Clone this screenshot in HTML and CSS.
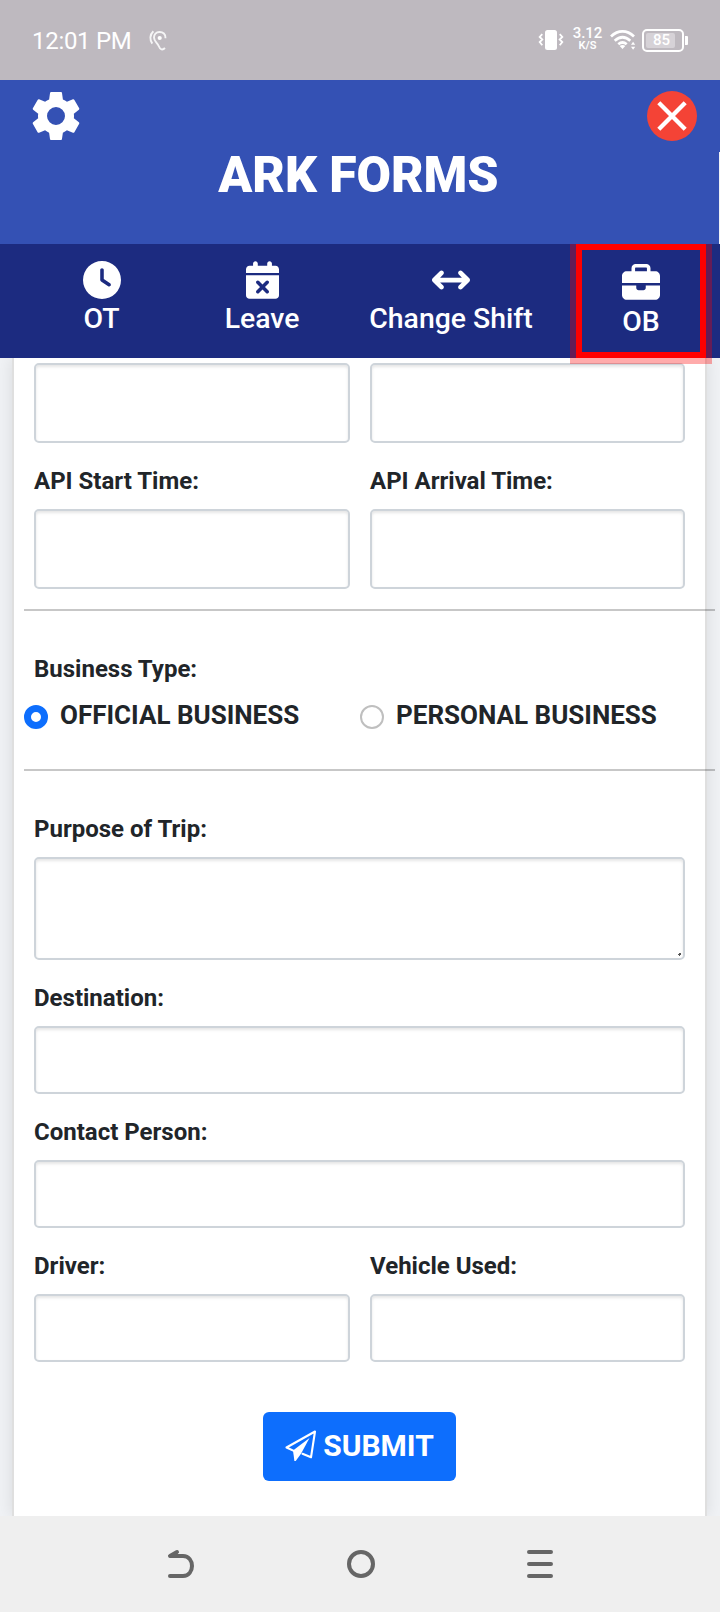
FILE: index.html
```html
<!DOCTYPE html>
<html lang="en">
<head>
<meta charset="utf-8">
<title>ARK Forms</title>
<link rel="stylesheet" href="styles.css">
</head>
<body>
<div class="statusbar">
  <span class="clock">12:01 PM</span>
  <svg class="ear" width="20" height="22" viewBox="0 0 20 22" fill="none" stroke="#fff" stroke-opacity=".85" stroke-width="1.9"><path d="M4.4 1.2C.6 4.600.6 10 3.300 13.600M16.500 8.300C16.800 4 14 2 10.500 2 7 2 5 4.800 5 7.500c0 4 3.500 5 5 9 1 3 3.500 4 6 1.500"/><circle cx="10.700" cy="8" r="2.100" fill="#fff" stroke="none"/></svg>
  <span class="spacer"></span>
  <svg class="vibrate" width="26" height="22" viewBox="0 0 26 22" fill="none" stroke="#fff" stroke-width="1.800"><rect x="7" y="1" width="12" height="20" rx="2.500" fill="#fff" stroke="none"/><path d="M4.300 5.200 1.700 8l2.600 2.500L1.700 13l2.600 3.300M21.700 5.200 24.300 8l-2.600 2.500 2.600 2.500-2.600 3.300"/></svg>
  <span class="speed"><b>3.12</b><i>K/S</i></span>
  <svg class="wifi" width="26" height="20" viewBox="0 0 26 20" fill="none" stroke="#fff" stroke-width="2.700"><path d="M1 6.500C8-.3 17-.3 24 6.500M4.700 10.800c5-4.600 10.600-4.600 15.600 0M8.300 14.300c3-2.600 5.400-2.600 8.400 0"/><path d="m9.700 16 2.800 3 2.800-3c-1.500-1.300-4-1.300-5.600 0zM21 14.700l2.100-3 2.100 3zM21 16.700l2.100 3 2.100-3z" fill="#fff" stroke="none"/></svg>
  <span class="battery"><span class="level">85</span></span><span class="cap"></span>
</div>

<header class="header">
  <div class="actions">
    <svg class="gear" width="60" height="60" viewBox="0 0 24 24" fill="#fff"><path fill-rule="evenodd" d="M19.140 12.940c.04-.3.060-.61.060-.94 0-.32-.02-.64-.07-.94l2.030-1.580c.18-.14.23-.41.12-.61l-1.920-3.320c-.12-.22-.37-.29-.59-.22l-2.390.96c-.5-.38-1.030-.7-1.620-.94l-.36-2.540c-.04-.24-.24-.41-.48-.41h-3.840c-.24 0-.43.17-.47.41l-.36 2.540c-.59.24-1.130.57-1.620.94l-2.390-.96c-.22-.08-.47 0-.59.22L2.740 8.870c-.12.21-.08.47.12.61l2.030 1.580c-.05.3-.09.63-.09.94s.02.64.07.94l-2.030 1.580c-.18.14-.23.41-.12.61l1.920 3.320c.12.22.37.29.59.22l2.390-.96c.5.38 1.030.7 1.620.94l.36 2.540c.05.24.24.41.48.41h3.840c.24 0 .44-.17.47-.41l.36-2.540c.59-.24 1.130-.56 1.620-.94l2.390.96c.22.08.47 0 .59-.22l1.920-3.320c.12-.22.07-.47-.12-.61zM12 15.600a3.600 3.600 0 1 1 0-7.200 3.600 3.600 0 0 1 0 7.200z"/></svg>
    <svg width="50" height="50" viewBox="0 0 50 50"><circle cx="25" cy="25" r="25" fill="#f44336"/><path d="m11.800 11.800 26.400 26.400m0-26.400L11.800 38.200" stroke="#fff" stroke-width="4.300"/></svg>
  </div>
  <h1 class="title">ARK FORMS</h1>
  <span class="edge"></span>
</header>

<nav class="tabs">
  <a class="tab"><svg width="38" height="38" viewBox="0 0 512 512" fill="#fff"><path d="M256 0a256 256 0 1 1 0 512A256 256 0 1 1 256 0zM232 120V256c0 8 4 15.500 10.700 20l96 64c11 7.400 25.900 4.400 33.300-6.700s4.400-25.900-6.700-33.300L280 243.200V120c0-13.300-10.700-24-24-24s-24 10.700-24 24z"/></svg><span>OT</span></a>
  <a class="tab"><svg width="33" height="38" viewBox="0 0 448 512" fill="#fff"><path d="M128 0c17.700 0 32 14.300 32 32V64H288V32c0-17.700 14.300-32 32-32s32 14.300 32 32V64h48c26.500 0 48 21.500 48 48v48H0V112C0 85.500 21.500 64 48 64H96V32c0-17.700 14.300-32 32-32zM0 192H448V464c0 26.500-21.500 48-48 48H48c-26.500 0-48-21.500-48-48V192zM305 305c9.400-9.400 9.400-24.600 0-33.900s-24.600-9.400-33.900 0l-47 47-47-47c-9.400-9.400-24.600-9.400-33.900 0s-9.400 24.600 0 33.900l47 47-47 47c-9.400 9.400-9.400 24.600 0 33.900s24.600 9.400 33.900 0l47-47 47 47c9.400 9.400 24.600 9.400 33.900 0s9.400-24.600 0-33.900l-47-47 47-47z"/></svg><span>Leave</span></a>
  <a class="tab"><svg width="38" height="38" viewBox="0 0 512 512" fill="#fff"><path d="M406.600 374.600l96-96c12.500-12.500 12.500-32.800 0-45.300l-96-96c-12.500-12.500-32.800-12.500-45.300 0s-12.500 32.800 0 45.300L402.700 224l-293.500 0 41.400-41.400c12.500-12.500 12.500-32.800 0-45.300s-32.800-12.500-45.300 0l-96 96c-12.500 12.500-12.500 32.800 0 45.300l96 96c12.500 12.500 32.800 12.500 45.300 0s12.500-32.800 0-45.300L109.300 288l293.500 0-41.400 41.400c-12.500 12.500-12.500 32.800 0 45.300s32.800 12.500 45.300 0z"/></svg><span>Change Shift</span></a>
  <a class="tab active"><svg width="38" height="38" viewBox="0 0 512 512" fill="#fff"><path d="M184 48H328c4.400 0 8 3.600 8 8V96H176V56c0-4.400 3.600-8 8-8zm-56 8V96H64C28.700 96 0 124.700 0 160v96H512V160c0-35.300-28.700-64-64-64H384V56c0-30.900-25.100-56-56-56H184c-30.900 0-56 25.100-56 56zM512 288H320v32c0 17.700-14.300 32-32 32H224c-17.700 0-32-14.300-32-32V288H0V416c0 35.300 28.700 64 64 64H448c35.300 0 64-28.700 64-64V288z"/></svg><span>OB</span></a>
</nav>

<main class="page">
  <form class="card">
    <div class="row first">
      <input class="field tall">
      <input class="field tall">
    </div>
    <div class="row">
      <label class="group"><span class="label">API Start Time:</span><input class="field tall"></label>
      <label class="group"><span class="label">API Arrival Time:</span><input class="field tall"></label>
    </div>
    <hr class="rule">
    <div class="business">
      <span class="label">Business Type:</span>
      <div class="radios">
        <label class="option"><span class="radio checked"></span><span>OFFICIAL BUSINESS</span></label>
        <label class="option"><span class="radio"></span><span>PERSONAL BUSINESS</span></label>
      </div>
    </div>
    <hr class="rule">
    <label class="group purpose"><span class="label">Purpose of Trip:</span>
      <span class="field area"><svg class="grip" width="3" height="3" viewBox="0 0 3 3"><path d="M0 1h1V0h2v2H2v1H1V2H0z" fill="#555"/></svg></span></label>
    <label class="group"><span class="label">Destination:</span><input class="field"></label>
    <label class="group"><span class="label">Contact Person:</span><input class="field"></label>
    <div class="row">
      <label class="group"><span class="label">Driver:</span><input class="field"></label>
      <label class="group"><span class="label">Vehicle Used:</span><input class="field"></label>
    </div>
    <button class="submit" type="button"><svg width="32" height="32" viewBox="0 0 32 32"><path d="M30 1.500 1.500 17.500l7.300 3.400M30 1.500 26 27.300l-8.500-3.500" fill="none" stroke="#fff" stroke-width="2.100" stroke-linejoin="round" stroke-linecap="round"/><path d="M24.500 8 8 20.600l1.400 10.300h1.300l5.300-7.200z" fill="#fff"/></svg><span>SUBMIT</span></button>
  </form>
</main>

<footer class="sysnav">
  <svg width="28" height="30" viewBox="0 0 28 30" fill="none" stroke="#666" stroke-width="4" stroke-linecap="round" stroke-linejoin="round"><path d="M10 3 3 7h13c12 0 12 20 0 20H3"/></svg>
  <svg width="28" height="28" viewBox="0 0 28 28" fill="none" stroke="#666" stroke-width="4"><circle cx="14" cy="14" r="12"/></svg>
  <svg width="26" height="28" viewBox="0 0 26 28" stroke="#666" stroke-width="4" stroke-linecap="round"><path d="M2 2h22M2 14h22M2 26h22"/></svg>
</footer>
</body>
</html>
```
FILE: styles.css
```css
* { box-sizing: border-box; }
body {
  margin: 0;
  width: 720px;
  height: 1612px;
  overflow: hidden;
  display: flex;
  flex-direction: column;
  font-family: Roboto, "Liberation Sans", sans-serif;
  color: #212529;
  background: #f0f2f5;
}
svg { display: block; flex: none; }

.statusbar {
  height: 80px;
  flex: none;
  display: flex;
  align-items: center;
  padding: 0 32px;
  background: #beb9bf;
  color: #fff;
}
.clock { font-size: 24px; letter-spacing: -.3px; line-height: 30px; width: 99px; padding-top: 2px; white-space: nowrap; }
.ear { margin: 1px 0 0 18px; }
.spacer { flex: 1; }
.vibrate { margin-right: 9px; }
.speed { width: 29px; display: flex; flex-direction: column; align-items: center; margin-right: 8px; padding-bottom: 2px; }
.speed b { font-size: 15px; line-height: 13px; font-weight: 500; }
.speed i { font-size: 11px; line-height: 12px; font-style: normal; font-weight: 600; }
.wifi { margin-right: 6px; }
.battery { width: 42px; height: 23px; border: 2px solid #fff; border-radius: 5px; padding: 2px; }
.level { display: block; width: 29px; height: 15px; border-radius: 2px; background: #d6d2d7; font-size: 15px; line-height: 15px; font-weight: 500; padding-left: 7px; }
.cap { width: 3px; height: 9px; margin-left: 1px; background: #fff; border-radius: 0 1px 1px 0; }

.header { position: relative; z-index: 2; height: 164px; flex: none; background: #3451b4; }
.actions { display: flex; justify-content: space-between; align-items: center; height: 66px; padding: 6px 23px 0 26px; }
.title { margin: -1px 0 0; padding-right: 3px; text-align: center; color: #fff; font-size: 50px; line-height: 60px; font-weight: 900; letter-spacing: -.05px; }
.edge { position: absolute; right: 0; top: 72px; width: 1px; height: 92px; background: #f0f2f5; }

.tabs { position: relative; z-index: 1; height: 114px; flex: none; display: grid; grid-template-columns: 193px 128px 250px 130px; padding-left: 5px; background: #1c2b80; }
.tab { display: flex; flex-direction: column; align-items: center; padding-top: 17px; color: #fff; font-size: 28.4px; line-height: 40px; font-weight: 500; }
.tab.active { border: 6px solid #f00; padding-top: 14px; box-shadow: 0 0 0 6px rgba(255, 0, 0, .33); }

.page { flex: 1; min-height: 0; padding: 0 13px 0 12px; }
.card { height: 1158px; display: flex; flex-direction: column; padding: 5px 20px 0; background: #fff; border: solid #dfdfdf; border-width: 0 2px; box-shadow: 0 0 16px rgba(0, 0, 0, .1); }
.row { display: grid; grid-template-columns: 316px 315px; gap: 20px; flex: none; }
.group { display: block; flex: none; }
.label { display: block; margin: 20px 0 10px; font-size: 24px; line-height: 36px; font-weight: 700; }
.field { display: block; width: 100%; height: 68px; border: 2px solid #ced4da; border-radius: 5px; background: #fff; box-shadow: inset 0 2px 3px rgba(0, 0, 0, .1); padding: 0; }
.tall { height: 80px; }
.area { height: 103px; display: flex; justify-content: flex-end; align-items: flex-end; padding: 2px; }
.rule { width: 691px; height: 2px; flex: none; margin: 20px 0 0 -10px; border: 0; background: rgba(0, 0, 0, .22); }
.business { height: 158px; margin-bottom: -20px; flex: none; padding-top: 20px; }
.radios { display: grid; grid-template-columns: 336px 1fr; margin-left: -10px; }
.option { display: flex; gap: 12px; font-size: 26px; line-height: 36px; font-weight: 700; white-space: nowrap; }
.radio { width: 24px; height: 24px; flex: none; margin-top: 8px; border: 2px solid #bfbfbf; border-radius: 50%; }
.radio.checked { border: 7px solid #0d6efd; }
.purpose { margin-top: 20px; }
.submit { width: 193px; height: 69px; flex: none; margin: 50px 0 0 229px; display: flex; align-items: center; justify-content: center; gap: 6px; border: 0; border-radius: 6px; background: #0d6efd; color: #fff; font: 700 30px/40px Roboto, sans-serif; padding: 0 0 2px; }

.sysnav { height: 96px; flex: none; position: relative; z-index: 1; display: flex; justify-content: space-between; align-items: center; padding: 0 167px; background: #efefef; }
```
